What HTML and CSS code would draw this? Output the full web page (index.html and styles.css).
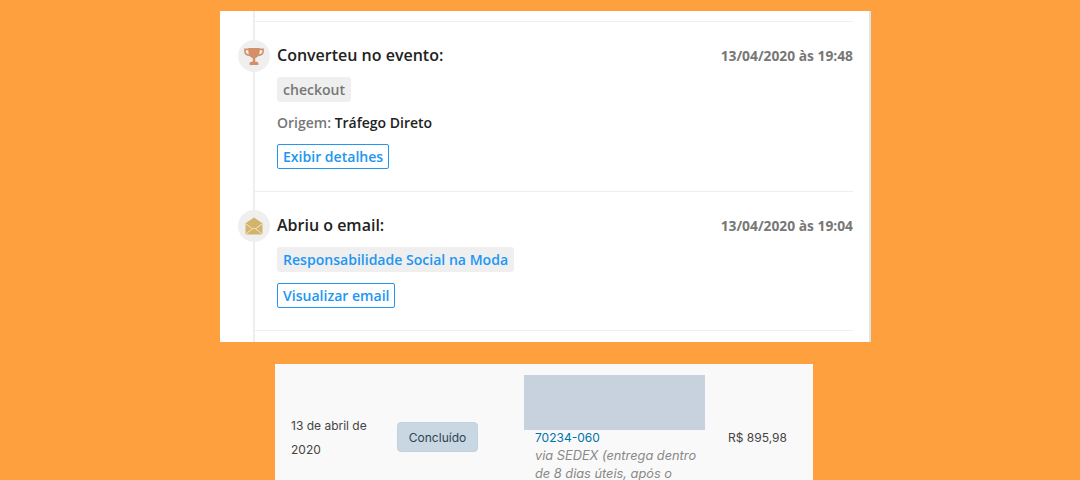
FILE: index.html
```html
<!DOCTYPE html>
<html lang="pt-BR">
<head>
<meta charset="utf-8">
<title>Timeline</title>
<link rel="stylesheet" href="styles.css">
</head>
<body>
<section class="card">
  <div class="timeline">
    <div class="top-rule"></div>
    <article class="event event-convert">
      <span class="badge">
        <svg viewBox="0 0 20 17" width="20" height="17" aria-hidden="true"><path fill="none" stroke="#d48f68" stroke-width="1.6" d="M5 1.400H.9v1.800c0 2.400 2 3.900 5 4.200M15 1.400h4.100v1.800c0 2.400-2 3.900-5 4.200"/><path fill="#d48f68" d="M4.300 0h11.400v3c0 3.700-1.900 6.300-4.500 7.200v3.600h1.400c1 0 1.800.8 1.800 1.800V17H5.600v-1.400c0-1 .8-1.800 1.800-1.800h1.400v-3.600C6.200 9.300 4.300 6.700 4.300 3z"/></svg>
      </span>
      <div class="head"><h3>Converteu no evento:</h3><time>13/04/2020 às 19:48</time></div>
      <div class="tag">checkout</div>
      <p class="origin">Origem: <strong>Tráfego Direto</strong></p>
      <a class="btn" href="#">Exibir detalhes</a>
    </article>
    <article class="event event-email">
      <span class="badge">
        <svg viewBox="0 0 20 20" width="20" height="20" aria-hidden="true"><path fill="#d4b46c" d="M10 1.500 18.500 7.200V17.500a1 1 0 0 1-1 1h-15a1 1 0 0 1-1-1V7.200z"/><path fill="none" stroke="#f3e6cb" stroke-width="1" d="M1.800 7.800 7.800 12.300M18.200 7.800 12.200 12.300M2 18l6-5c1.200-.9 2.800-.9 4 0l6 5"/></svg>
      </span>
      <div class="head"><h3>Abriu o email:</h3><time>13/04/2020 às 19:04</time></div>
      <div class="tag tag-link">Responsabilidade Social na Moda</div>
      <a class="btn" href="#">Visualizar email</a>
    </article>
  </div>
</section>
<section class="order">
  <div class="order-date">13 de abril de 2020</div>
  <div class="order-status"><span class="status">Concluído</span></div>
  <div class="order-address">
    <div class="redacted"></div>
    <a class="zip" href="#">70234-060</a>
    <em>via SEDEX (entrega dentro de 8 dias úteis, após o</em>
  </div>
  <div class="order-total">R$ 895,98</div>
</section>
</body>
</html>
```
FILE: styles.css
```css
* { box-sizing: border-box; }
html, body { height: 100%; }
body {
  margin: 0;
  height: 480px;
  overflow: hidden;
  background: #ffa03f;
  padding: 11px 0 0 220px;
  font-family: "Open Sans", "Liberation Sans", sans-serif;
}
.card {
  width: 651px;
  height: 331px;
  background: #fff;
  border-right: 2px solid #dfe3e8;
  padding-left: 33px;
  overflow: hidden;
}
.timeline {
  height: 100%;
  width: 600px;
  border-left: 2px solid #eeeeee;
}
.top-rule { height: 11px; border-bottom: 1px solid #eeeeee; }
.event {
  position: relative;
  padding: 23px 0 0 22px;
  border-bottom: 1px solid #eeeeee;
}
.event-convert { height: 170px; }
.event-email { height: 139px; }
.badge {
  position: absolute;
  left: -17px;
  top: 18px;
  width: 32px;
  height: 32px;
  border-radius: 50%;
  background: #efefef;
  display: flex;
  align-items: center;
  justify-content: center;
}
.head {
  display: flex;
  justify-content: space-between;
  align-items: center;
  height: 20px;
}
h3 {
  margin: 0;
  font-size: 16px;
  font-weight: 600;
  color: #222;
}
time {
  font-size: 13.8px;
  font-weight: 700;
  color: #777;
}
.tag {
  display: table;
  margin-top: 12px;
  height: 25px;
  line-height: 25px;
  padding: 0 6px;
  border-radius: 3px;
  background: #efefef;
  color: #777;
  font-size: 14.06px;
  font-weight: 600;
}
.tag-link { color: #2196f3; }
.origin {
  margin: 11px 0 0;
  height: 20px;
  line-height: 20px;
  font-size: 14px;
  font-weight: 600;
  color: #777;
}
.origin strong { font-weight: 600; color: #222; }
.btn {
  display: table;
  height: 25px;
  line-height: 23px;
  margin-top: 11px;
  padding: 0 5px;
  border: 1px solid #2196f3;
  border-radius: 2px;
  color: #2196f3;
  font-size: 14.06px;
  font-weight: 600;
  text-decoration: none;
}
.order {
  width: 538px;
  height: 120px;
  margin: 22px 0 0 55px;
  background: #f9f9f9;
  padding: 11px 0 0 16px;
  display: grid;
  grid-template-columns: 106px 127px 204px auto;
  font-family: Inter, "Liberation Sans", sans-serif;
  font-size: 12px;
  color: #444;
}
.order-date { width: 90px; margin-top: 39px; line-height: 24px; }
.order-status { margin-top: 47px; }
.status {
  display: inline-block;
  width: 81px;
  height: 30px;
  line-height: 29px;
  text-align: center;
  background: #c8d7e1;
  border: 1px solid #c3d2dc;
  border-radius: 4px;
  color: #2e4453;
}
.redacted { width: 181px; height: 55px; background: #c7d2de; }
.order-address a, .order-address em { display: block; margin-left: 11px; width: 170px; }
.zip { color: #0073aa; text-decoration: none; line-height: 15px; }
.order-address em { color: #888; font-size: 12.8px; line-height: 18px; margin-top: 2px; }
.order-total { margin-top: 55px; line-height: 15px; }
```
